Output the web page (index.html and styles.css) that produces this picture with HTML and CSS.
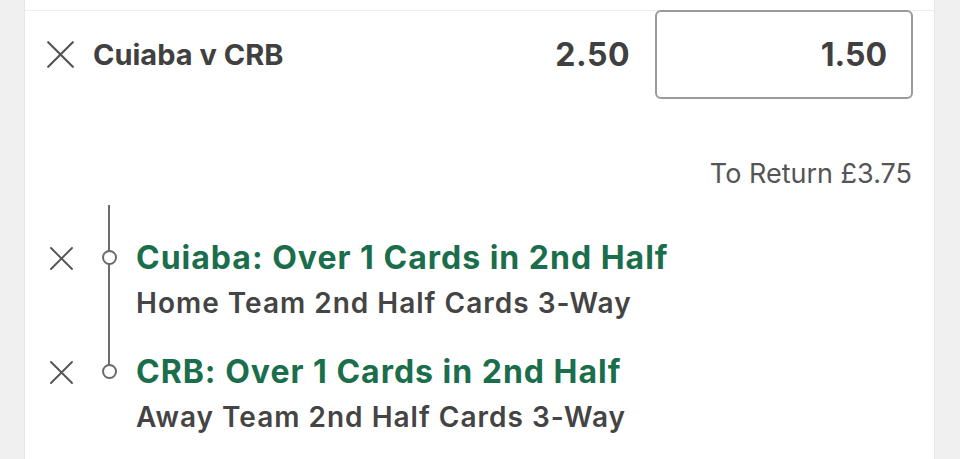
FILE: index.html
```html
<!DOCTYPE html>
<html lang="en">
<head>
<meta charset="utf-8">
<title>Bet slip</title>
<link rel="stylesheet" href="styles.css">
</head>
<body>
<div class="slip">
  <div class="slip-top"></div>
  <div class="bet-row">
    <button class="remove" aria-label="Remove bet">
      <svg width="27" height="27" viewBox="0 0 27 27"><path d="M1.2 1.2L25.8 25.8M25.8 1.2L1.2 25.8" stroke="#555" stroke-width="2.2" stroke-linecap="round" fill="none"/></svg>
    </button>
    <span class="event">Cuiaba v CRB</span>
    <span class="odds">2.50</span>
    <div class="stake">1.50</div>
  </div>
  <div class="returns">To Return £3.75</div>
  <ul class="legs">
    <li class="leg first">
      <button class="remove small" aria-label="Remove selection">
        <svg width="23" height="23" viewBox="0 0 23 23"><path d="M1 1L22 22M22 1L1 22" stroke="#555" stroke-width="1.9" stroke-linecap="round" fill="none"/></svg>
      </button>
      <span class="rail"><span class="dot"></span></span>
      <div class="leg-text">
        <div class="selection">Cuiaba: Over 1 Cards in 2nd Half</div>
        <div class="market">Home Team 2nd Half Cards 3-Way</div>
      </div>
    </li>
    <li class="leg last">
      <button class="remove small" aria-label="Remove selection">
        <svg width="23" height="23" viewBox="0 0 23 23"><path d="M1 1L22 22M22 1L1 22" stroke="#555" stroke-width="1.9" stroke-linecap="round" fill="none"/></svg>
      </button>
      <span class="rail"><span class="dot"></span></span>
      <div class="leg-text">
        <div class="selection">CRB: Over 1 Cards in 2nd Half</div>
        <div class="market">Away Team 2nd Half Cards 3-Way</div>
      </div>
    </li>
  </ul>
</div>
</body>
</html>
```

FILE: styles.css
```css
* { box-sizing: border-box; }

html, body {
  margin: 0;
  height: 100%;
  background: #f0f0f0;
  overflow: hidden;
}

body {
  font-family: Inter, "Helvetica Neue", Arial, sans-serif;
  color: #404040;
}

.slip {
  margin: 0 25px 0 24px;
  height: 459px;
  background: #fff;
  border-left: 1px solid #e6e6e6;
  border-right: 1px solid #e6e6e6;
}

.slip-top {
  height: 11px;
  border-bottom: 1px solid #eeeeee;
}

.bet-row {
  display: flex;
  align-items: center;
  height: 89px;
  padding: 0 21px 0 22px;
  margin-top: -1px;
}

.remove {
  border: 0;
  padding: 0;
  background: none;
  display: flex;
  flex: none;
}

.event {
  margin-left: 19px;
  font-size: 29px;
  font-weight: 700;
  color: #404040;
  flex: 1;
}

.odds {
  font-size: 32px;
  font-weight: 700;
  letter-spacing: 0.5px;
  color: #404040;
  margin-right: 25px;
}

.stake {
  width: 258px;
  height: 89px;
  border: 2px solid #9a9a9a;
  border-radius: 6px;
  display: flex;
  align-items: center;
  justify-content: flex-end;
  padding-right: 24px;
  font-size: 32px;
  font-weight: 700;
  color: #404040;
}

.returns {
  margin-top: 57px;
  padding-right: 22px;
  text-align: right;
  font-size: 27px;
  line-height: 36px;
  color: #555;
}

.legs {
  list-style: none;
  margin: 13px 0 0;
  padding: 0;
}

.leg {
  display: flex;
  align-items: flex-start;
  padding-left: 25px;
}

.leg .small {
  margin-top: 42px;
}

.rail {
  position: relative;
  flex: none;
  width: 24px;
  margin-left: 24px;
  align-self: stretch;
}

/* connector between the legs of the bet */
.rail::before {
  content: "";
  position: absolute;
  left: 11px;
  width: 2px;
  top: 0;
  background: #6a6a6a;
}

.first .rail::before { bottom: 0; }
.last .rail::before { height: 52px; }

.dot {
  position: absolute;
  left: 4.5px;
  top: 45px;
  width: 15px;
  height: 15px;
  border: 2px solid #6a6a6a;
  border-radius: 50%;
  background: #fff;
}

.leg-text {
  margin-left: 15px;
  padding-top: 35px;
}

.first .leg-text { padding-bottom: 0; }
.last .leg-text { padding-top: 33px; }
.last .small { margin-top: 40px; }
.last .dot { top: 43px; }
.last .rail::before { height: 50px; }

.selection {
  font-size: 32px;
  line-height: 36px;
  letter-spacing: 1px;
  font-weight: 700;
  color: #1b6e4c;
}

.market {
  font-size: 28px;
  line-height: 36px;
  letter-spacing: 1px;
  margin-top: 9px;
  font-weight: 600;
  color: #444;
}
```
